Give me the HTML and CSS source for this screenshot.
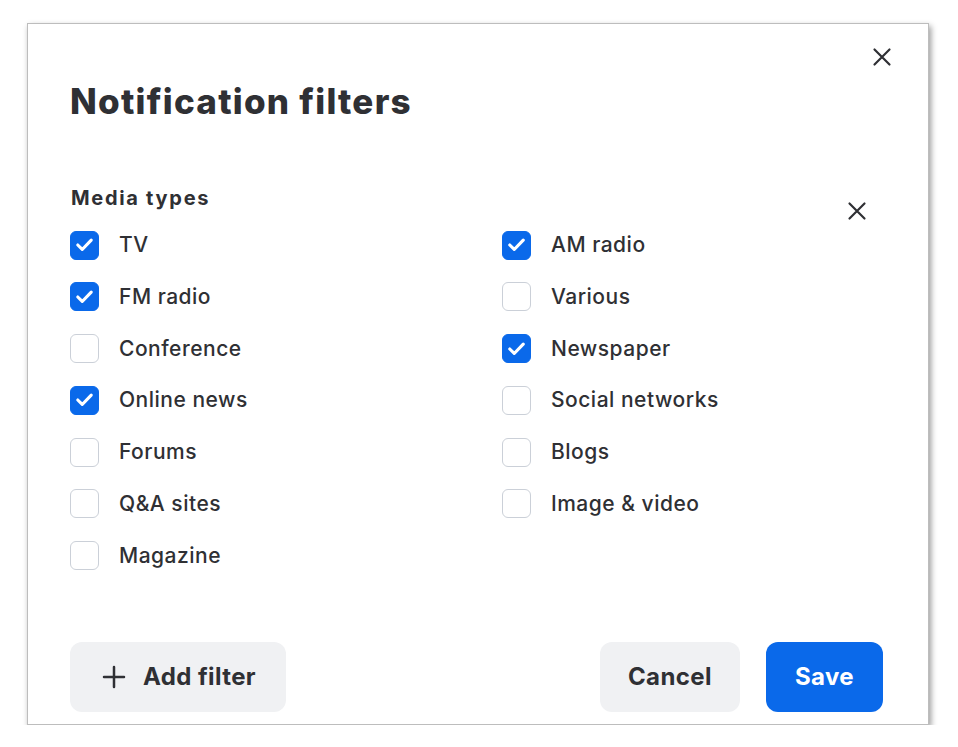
FILE: index.html
```html
<!DOCTYPE html>
<html lang="en">
<head>
<meta charset="utf-8">
<title>Notification filters</title>
<link rel="stylesheet" href="styles.css">
</head>
<body>
<div class="modal" role="dialog" aria-labelledby="title">
  <button class="icon-btn modal-close" aria-label="Close">
    <svg viewBox="0 0 24 24" width="24" height="24"><path d="M4.5 4.5 L19.5 19.5 M19.5 4.5 L4.5 19.5" /></svg>
  </button>
  <h1 id="title" class="title">Notification filters</h1>

  <section class="filter">
    <div class="filter-body">
      <h2 class="filter-title">Media types</h2>
      <div class="options">
        <label class="option"><span class="box checked"><svg viewBox="0 0 28 28"><path d="M7.5 14.5 L11.8 18.8 L20.5 9.8"/></svg></span>TV</label>
        <label class="option"><span class="box checked"><svg viewBox="0 0 28 28"><path d="M7.5 14.5 L11.8 18.8 L20.5 9.8"/></svg></span>AM radio</label>
        <label class="option"><span class="box checked"><svg viewBox="0 0 28 28"><path d="M7.5 14.5 L11.8 18.8 L20.5 9.8"/></svg></span>FM radio</label>
        <label class="option"><span class="box"></span>Various</label>
        <label class="option"><span class="box"></span>Conference</label>
        <label class="option"><span class="box checked"><svg viewBox="0 0 28 28"><path d="M7.5 14.5 L11.8 18.8 L20.5 9.8"/></svg></span>Newspaper</label>
        <label class="option"><span class="box checked"><svg viewBox="0 0 28 28"><path d="M7.5 14.5 L11.8 18.8 L20.5 9.8"/></svg></span>Online news</label>
        <label class="option"><span class="box"></span>Social networks</label>
        <label class="option"><span class="box"></span>Forums</label>
        <label class="option"><span class="box"></span>Blogs</label>
        <label class="option"><span class="box"></span>Q&amp;A sites</label>
        <label class="option"><span class="box"></span>Image &amp; video</label>
        <label class="option"><span class="box"></span>Magazine</label>
      </div>
    </div>
    <button class="icon-btn filter-remove" aria-label="Remove filter">
      <svg viewBox="0 0 24 24" width="24" height="24"><path d="M4.5 4.5 L19.5 19.5 M19.5 4.5 L4.5 19.5" /></svg>
    </button>
  </section>

  <footer class="footer">
    <button class="btn btn-secondary btn-add">
      <svg viewBox="0 0 24 24" width="24" height="24"><path d="M12 2 V22 M2 12 H22"/></svg>
      Add filter
    </button>
    <div class="actions">
      <button class="btn btn-secondary">Cancel</button>
      <button class="btn btn-primary">Save</button>
    </div>
  </footer>
</div>
</body>
</html>
```

FILE: styles.css
```css
* { box-sizing: border-box; }

html, body {
  margin: 0;
  padding: 0;
  background: #ffffff;
}

body {
  font-family: Inter, "Noto Sans", "Liberation Sans", sans-serif;
  color: #2f3034;
}

.modal {
  position: relative;
  margin: 23px 0 0 27px;
  width: 902px;
  height: 702px;
  background: #ffffff;
  border: 1px solid #bdbdbd;
  box-shadow: 2px 3px 6px rgba(0, 0, 0, 0.4);
  padding: 57px 45px 0 42px;
  display: flex;
  flex-direction: column;
}

.icon-btn {
  border: none;
  background: transparent;
  padding: 0;
  width: 24px;
  height: 24px;
  cursor: pointer;
  display: flex;
  align-items: center;
  justify-content: center;
}

.icon-btn svg path {
  fill: none;
  stroke: #2f3034;
  stroke-width: 2.2;
  stroke-linecap: round;
}

.modal-close {
  position: absolute;
  top: 21px;
  right: 34px;
}

.title {
  margin: 0;
  font-size: 35px;
  line-height: 40px;
  font-weight: 800;
  letter-spacing: 1.25px;
}

.filter {
  margin-top: 65px;
  display: flex;
  align-items: flex-start;
}

.filter-body {
  flex: 1;
}

.filter-title {
  margin: 0 0 21px 1px;
  font-size: 20px;
  line-height: 24px;
  font-weight: 700;
  letter-spacing: 1.7px;
}

.filter-remove {
  margin-top: 13px;
  margin-right: 14px;
}

.options {
  display: grid;
  grid-template-columns: 432px 1fr;
  row-gap: 23.8px;
}

.option {
  display: flex;
  align-items: center;
  gap: 20px;
  height: 28px;
  font-size: 21px;
  line-height: 28px;
  font-weight: 500;
  letter-spacing: 0.5px;
  cursor: pointer;
}

.box {
  width: 29px;
  height: 29px;
  flex: none;
  border-radius: 6px;
  border: 1.5px solid #cbd0d8;
  background: #ffffff;
  display: flex;
}

.box.checked {
  background: #0a69ea;
  border-color: #0a69ea;
}

.box svg {
  margin: -1.5px;
  width: 29px;
  height: 29px;
}

.box svg path {
  fill: none;
  stroke: #ffffff;
  stroke-width: 3;
  stroke-linecap: round;
  stroke-linejoin: round;
}

.footer {
  margin-top: 72px;
  display: flex;
  justify-content: space-between;
  align-items: center;
}

.actions {
  display: flex;
  gap: 26px;
}

.btn {
  height: 70px;
  border: none;
  border-radius: 12px;
  padding: 0 28px;
  font-family: inherit;
  font-size: 24px;
  font-weight: 700;
  letter-spacing: 0.4px;
  display: inline-flex;
  align-items: center;
  cursor: pointer;
}

.btn-add {
  padding-left: 32px;
  padding-right: 30px;
  gap: 17px;
}

.btn-add svg path {
  fill: none;
  stroke: #2f3034;
  stroke-width: 2.5;
  stroke-linecap: round;
}

.btn-secondary {
  background: #f0f1f3;
  color: #2f3034;
}

.btn-primary {
  background: #0a69ea;
  color: #ffffff;
  padding: 0 29px;
}
```
